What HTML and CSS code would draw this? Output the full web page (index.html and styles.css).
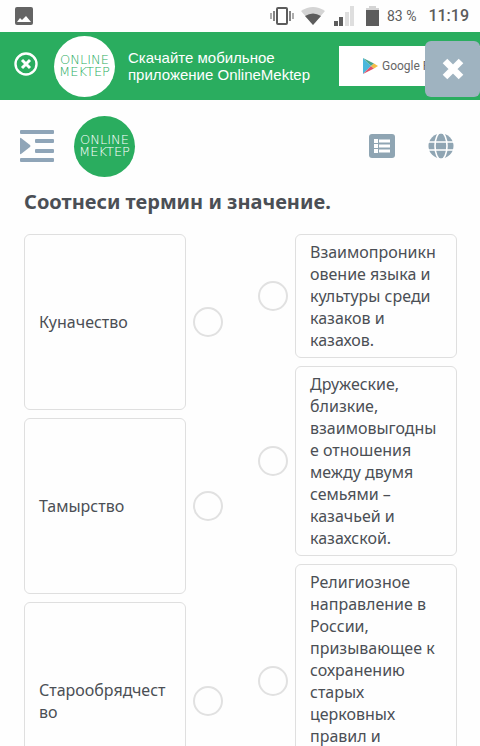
FILE: index.html
```
<!DOCTYPE html>
<html lang="ru">
<head>
<meta charset="UTF-8">
<meta name="viewport" content="width=device-width, initial-scale=1.0">
<title>Online Mektep</title>
<link rel="stylesheet" href="styles.css">
</head>

<body>
  <div class="status-bar">
    <svg class="status-picture" width="18" height="18" viewBox="0 0 18 18">
      <rect width="18" height="18" rx="2" fill="#646464"/>
      <path d="M2 15L5 11L7 13L11 9L16 15Z" fill="#fff"/>
    </svg>
    <svg width="24" height="18" viewBox="0 0 24 18" fill="none" stroke="#5c5c5c">
      <rect x="7" y="1" width="10" height="16" rx="1" stroke-width="2"/>
      <path d="M4 4V14M20 4V14" stroke-width="1.500"/>
      <path d="M1 6V12M23 6V12" stroke-width="1"/>
    </svg>
    <svg class="status-wifi" width="24" height="18" viewBox="0 0 24 18">
      <path d="M0 4 Q12 -4 24 4 L12 18 Z" fill="#d4d4d4"/>
      <path d="M4 9 Q12 4 20 9 L12 18 Z" fill="#5c5c5c"/>
    </svg>
    <svg class="status-signal" width="20" height="20" viewBox="0 0 20 20">
      <path d="M0 15h4v5H0zM5 11h4v9H5z" fill="#5c5c5c"/>
      <path d="M11 6h4v14h-4zM16 0h4v20h-4z" fill="#dedede"/>
    </svg>
    <svg class="status-battery" width="13" height="20" viewBox="0 0 13 20">
      <path d="M3 0h7v2h3v3H0V2h3z" fill="#d4d4d4"/>
      <path d="M0 4h13v16H0z" fill="#5c5c5c"/>
    </svg>
    <span class="status-percent">83 %</span>
    <span class="status-time">11:19</span>
  </div>

  <div class="banner">
    <button class="banner-close" type="button" aria-label="Скрыть">
      <svg width="24" height="24" viewBox="0 0 24 24" fill="none" stroke="#fff">
        <circle cx="12" cy="12" r="10.500" stroke-width="2.400"/>
        <path d="M8 8L16 16M16 8L8 16" stroke-width="3"/>
      </svg>
    </button>
    <div class="logo logo-white"><span>ONLINE</span><span>MEKTEP</span></div>
    <p class="banner-text">Скачайте мобильное приложение OnlineMektep</p>
    <a class="store" href="#">
      <svg width="15" height="16" viewBox="0 0 15 16">
        <path d="M0 0L8 8L0 16Z" fill="#4cb8dc"/>
        <path d="M0 0L11 5.500L8 8Z" fill="#4aa58c"/>
        <path d="M0 16L11 10.500L8 8Z" fill="#e0526a"/>
        <path d="M11 5.500L15 8L11 10.500L8 8Z" fill="#f3bd45"/>
      </svg>
      <span>Google Play</span>
    </a>
    <button class="close" type="button" aria-label="Закрыть">
      <svg width="22" height="22" viewBox="0 0 22 22" stroke="#fff" stroke-width="6.500">
        <path d="M3 3L19 19M19 3L3 19"/>
      </svg>
    </button>
  </div>

  <header class="header">
    <button class="icon-button" type="button" aria-label="Меню">
      <svg width="34" height="32" viewBox="0 0 34 32" fill="#8fa5b8">
        <rect y="0" width="34" height="4" rx="1"/>
        <rect x="15" y="9" width="19" height="4" rx="1"/>
        <rect x="15" y="19" width="19" height="4" rx="1"/>
        <rect y="28" width="34" height="4" rx="1"/>
        <path d="M0 8.500Q0 7.500 1 8L10 15Q11 16 10 17L1 24Q0 24.500 0 23.500Z"/>
      </svg>
    </button>
    <a class="logo logo-green" href="#"><span>ONLINE</span><span>MEKTEP</span></a>
    <button class="icon-button icon-list" type="button" aria-label="Список">
      <svg width="26" height="24" viewBox="0 0 26 24">
        <rect width="26" height="24" rx="3" fill="#8fa5b3"/>
        <path d="M5 5h4v4H5zM5 10h4v4H5zM5 15h4v4H5zM10 5.500h11v3H10zM10 10.500h11v3H10zM10 15.500h11v3H10z" fill="#fff"/>
      </svg>
    </button>
    <button class="icon-button" type="button" aria-label="Язык">
      <svg width="26" height="26" viewBox="0 0 26 26">
        <circle cx="13" cy="13" r="12.500" fill="#8fa5b3"/>
        <g fill="none" stroke="#fff" stroke-width="1.600">
          <ellipse cx="13" cy="13" rx="6" ry="13.500"/>
          <path d="M0 9H26M0 17H26"/>
        </g>
      </svg>
    </button>
  </header>

  <main class="task">
    <h1>Соотнеси термин и значение.</h1>
    <div class="match">
      <div class="column terms">
        <div class="item">
          <label class="card" for="term1">Куначество</label>
          <input class="dot" type="radio" name="term" id="term1">
        </div>
        <div class="item">
          <label class="card" for="term2">Тамырство</label>
          <input class="dot" type="radio" name="term" id="term2">
        </div>
        <div class="item">
          <label class="card" for="term3">Старообрядчество</label>
          <input class="dot" type="radio" name="term" id="term3">
        </div>
      </div>
      <div class="column meanings">
        <div class="item">
          <input class="dot" type="radio" name="meaning" id="meaning1">
          <label class="card" for="meaning1">Взаимопроникновение языка и культуры среди казаков и казахов.</label>
        </div>
        <div class="item">
          <input class="dot" type="radio" name="meaning" id="meaning2">
          <label class="card" for="meaning2">Дружеские, близкие, взаимовыгодные отношения между двумя семьями – казачьей и казахской.</label>
        </div>
        <div class="item">
          <input class="dot" type="radio" name="meaning" id="meaning3">
          <label class="card" for="meaning3">Религиозное направление в России, призывающее к сохранению старых церковных правил и церковных традиций.</label>
        </div>
      </div>
    </div>
  </main>
</body>
</html>
```

FILE: styles.css
```
* {
  box-sizing: border-box;
  margin: 0;
  padding: 0;
}

body {
  font-family: "Noto Sans", "Open Sans", sans-serif;
  font-size: 16px;
  line-height: 22px;
  color: #4b4f55;
  background-color: #fefefe;
}

button {
  border: none;
  background: none;
  cursor: pointer;
}

svg {
  display: block;
  flex-shrink: 0;
}

a {
  text-decoration: none;
}

/* status bar */
.status-bar {
  display: flex;
  align-items: center;
  height: 32px;
  padding: 0 11px 0 15px;
  font-family: Roboto, sans-serif;
  color: #5c5c5c;
}

.status-picture {
  margin-right: auto;
}

.status-wifi {
  margin-left: 7px;
}

.status-signal {
  margin-left: 9px;
}

.status-battery {
  margin: 0 8px 0 12px;
}

.status-percent {
  font-size: 14px;
}

.status-time {
  margin-left: 12px;
  font-size: 16px;
  font-weight: 500;
}

/* app banner */
.banner {
  position: relative;
  display: flex;
  align-items: center;
  height: 68px;
  padding-left: 14px;
  overflow: hidden;
  background-color: #2aad5f;
}

.banner-close {
  margin: 0 16px 4px 0;
}

.banner-text {
  flex: 1;
  margin-left: 13px;
  font-family: "Liberation Sans", Arial, sans-serif;
  font-size: 15px;
  line-height: 17px;
  color: #fff;
}

.store {
  display: flex;
  align-items: center;
  gap: 4px;
  width: 141px;
  height: 40px;
  padding-left: 24px;
  background-color: #fff;
  font-family: Roboto, sans-serif;
  font-size: 12px;
  color: #666;
  white-space: nowrap;
}

.close {
  position: absolute;
  top: 9px;
  right: 0;
  display: flex;
  align-items: center;
  justify-content: center;
  width: 55px;
  height: 56px;
  border-radius: 6px;
  background-color: #9fb3c0;
}

.logo {
  display: flex;
  flex-direction: column;
  align-items: center;
  justify-content: center;
  flex-shrink: 0;
  width: 61px;
  height: 61px;
  border-radius: 50%;
  font-family: "DejaVu Sans", sans-serif;
  font-size: 13px;
  font-weight: 200;
  line-height: 12px;
}

.logo-white {
  background-color: #fff;
  color: #2aad5f;
}

.logo-green {
  margin: 0 auto 0 20px;
  background-color: #2aad5f;
  color: #fff;
}

/* page header */
.header {
  display: flex;
  align-items: center;
  height: 92px;
  padding: 0 26px 0 20px;
}

.icon-list {
  margin-right: 33px;
}

/* task */
.task {
  padding: 0 23px 24px 24px;
}

h1 {
  margin-bottom: 22px;
  font-size: 20px;
  line-height: 20px;
}

.match {
  display: flex;
  align-items: flex-start;
  gap: 35px;
}

.column {
  display: flex;
  flex: 1;
  flex-direction: column;
  gap: 8px;
  min-width: 0;
}

.item {
  display: flex;
  align-items: center;
  gap: 7px;
}

.card {
  flex: 1;
  min-width: 0;
  padding: 6px 14px;
  border: 1px solid #dfdfdf;
  border-radius: 6px;
  overflow-wrap: break-word;
  cursor: pointer;
}

.terms .card {
  padding: 76px 14px;
}

.dot {
  appearance: none;
  flex-shrink: 0;
  width: 30px;
  height: 30px;
  border: 2px solid #e1e1e1;
  border-radius: 50%;
  cursor: pointer;
}

.dot:checked {
  border-color: #2aad5f;
}
```
